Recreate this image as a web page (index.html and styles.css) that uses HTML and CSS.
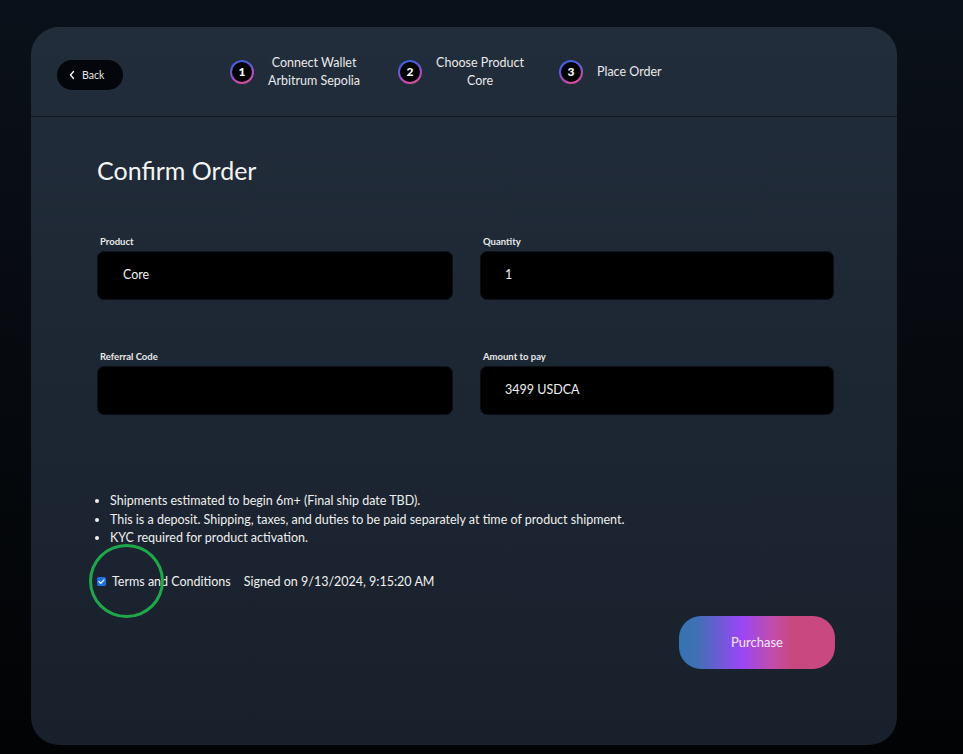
FILE: index.html
```html
<!DOCTYPE html>
<html lang="en">
<head>
<meta charset="utf-8">
<title>Confirm Order</title>
<link rel="stylesheet" href="styles.css">
</head>
<body>
<div class="card">
  <header class="header">
    <button class="back">
      <svg class="back-icon" width="8" height="10" viewBox="0 0 8 10"><path d="M5.5 1.5 L2.5 5 L5.5 8.5" fill="none" stroke="#fff" stroke-width="1.3" stroke-linecap="round" stroke-linejoin="round"/></svg>
      <span>Back</span>
    </button>
    <nav class="steps">
      <div class="step">
        <span class="num">1</span>
        <div class="step-text">Connect Wallet<br>Arbitrum Sepolia</div>
      </div>
      <div class="step">
        <span class="num">2</span>
        <div class="step-text">Choose Product<br>Core</div>
      </div>
      <div class="step step-last">
        <span class="num">3</span>
        <div class="step-text">Place Order</div>
      </div>
    </nav>
  </header>
  <main class="content">
    <h1 class="title">Confirm Order</h1>
    <div class="grid">
      <div class="field">
        <label class="label">Product</label>
        <div class="input input-wide">Core</div>
      </div>
      <div class="field">
        <label class="label">Quantity</label>
        <div class="input">1</div>
      </div>
      <div class="field">
        <label class="label">Referral Code</label>
        <div class="input"></div>
      </div>
      <div class="field">
        <label class="label">Amount to pay</label>
        <div class="input">3499 USDCA</div>
      </div>
    </div>
    <ul class="notes">
      <li>Shipments estimated to begin 6m+ (Final ship date TBD).</li>
      <li>This is a deposit. Shipping, taxes, and duties to be paid separately at time of product shipment.</li>
      <li>KYC required for product activation.</li>
    </ul>
    <div class="terms">
      <span class="check"><svg width="9" height="9" viewBox="0 0 9 9"><rect x="0" y="0" width="9" height="9" rx="1.5" fill="#1f6fe0"/><path d="M2 4.6 L3.8 6.3 L7 2.8" fill="none" stroke="#fff" stroke-width="1.2" stroke-linecap="round" stroke-linejoin="round"/></svg></span>
      <span class="terms-text">Terms and Conditions</span>
      <span class="signed">Signed on 9/13/2024, 9:15:20 AM</span>
      <span class="annot"></span>
    </div>
    <div class="actions">
      <button class="purchase">Purchase</button>
    </div>
  </main>
</div>
</body>
</html>
```
FILE: styles.css
```css
* { box-sizing: border-box; }
html, body { margin: 0; padding: 0; }
body {
  width: 963px;
  height: 754px;
  overflow: hidden;
  background: linear-gradient(180deg, #0b111a 0%, #05080c 60%, #020304 100%);
  font-family: "Lato", "Noto Sans", sans-serif;
  color: #f1f1f1;
  padding: 27px 0 0 31px;
}
.card {
  width: 866px;
  height: 718px;
  border-radius: 28px;
  background: linear-gradient(180deg, #222d3b 0%, #1d2734 45%, #18202b 100%);
  display: flex;
  flex-direction: column;
}
.header {
  height: 90px;
  border-bottom: 1px solid #10161e;
  display: flex;
  align-items: center;
  padding: 0 0 0 26px;
}
.back {
  width: 66px;
  height: 30px;
  border-radius: 15px;
  background: #03060a;
  border: none;
  color: #e8e8e8;
  font-family: inherit;
  font-size: 10.5px;
  display: flex;
  align-items: center;
  padding: 0 0 0 11px;
  gap: 6px;
  margin-top: 7px;
}
.steps {
  display: flex;
  align-items: center;
  margin-left: 107px;
  gap: 38px;
}
.step {
  display: flex;
  align-items: center;
  gap: 14px;
}
.step-last { margin-left: -3px; }
.num {
  width: 24px;
  height: 24px;
  border-radius: 50%;
  background: linear-gradient(#000, #000) padding-box, linear-gradient(160deg, #3466d2 0%, #5a5ae0 35%, #b44fc0 65%, #e8508a 100%) border-box;
  border: 2px solid transparent;
  display: flex;
  align-items: center;
  justify-content: center;
  font-size: 12px;
  font-weight: 900;
  color: #fff;
}
.step-text {
  text-align: center;
  font-size: 12.5px;
  line-height: 18px;
  color: #e9e9e9;
}
.content {
  padding: 40px 63px 0 66px;
  display: flex;
  flex-direction: column;
}
.title {
  margin: 0;
  font-size: 25px;
  font-weight: 400;
  line-height: 26px;
  color: #f4f4f4;
}
.grid {
  display: grid;
  grid-template-columns: 356px 354px;
  column-gap: 27px;
  row-gap: 51px;
  margin-top: 53px;
}
.field {
  display: flex;
  flex-direction: column;
}
.label {
  font-size: 9.5px;
  font-weight: 700;
  line-height: 12px;
  padding-left: 3px;
  margin-bottom: 3px;
  color: #e8e8e8;
}
.input {
  height: 49px;
  border-radius: 7px;
  background: #000;
  border: 1px solid #0c1118;
  display: flex;
  align-items: center;
  padding-left: 24px;
  padding-bottom: 2px;
  font-size: 12.5px;
  color: #f0f0f0;
}
.input-wide { padding-left: 25px; }
.notes {
  margin: 77px 0 0 0;
  padding: 0 0 0 13px;
  font-size: 12.5px;
  line-height: 18.5px;
  color: #efefef;
}
.terms {
  position: relative;
  display: flex;
  align-items: center;
  margin-top: 26px;
  font-size: 12.5px;
  height: 16px;
}
.check { display: flex; width: 9px; height: 9px; margin-right: 6px; }
.signed { margin-left: 13px; }
.annot {
  position: absolute;
  left: -8px;
  top: -30px;
  width: 75px;
  height: 74px;
  border: 3.5px solid #1fa84a;
  border-radius: 50%;
}
.actions {
  display: flex;
  justify-content: flex-end;
  margin-top: 26px;
  margin-right: -1px;
}
.purchase {
  width: 156px;
  height: 53px;
  border-radius: 22px;
  border: none;
  background: linear-gradient(90deg, #3573b0 0%, #3f70b5 12%, #9a46f6 40%, #c14dab 60%, #c9487f 72%, #c9487f 100%);
  color: #f6e6ff;
  font-family: inherit;
  font-size: 13px;
}
```
